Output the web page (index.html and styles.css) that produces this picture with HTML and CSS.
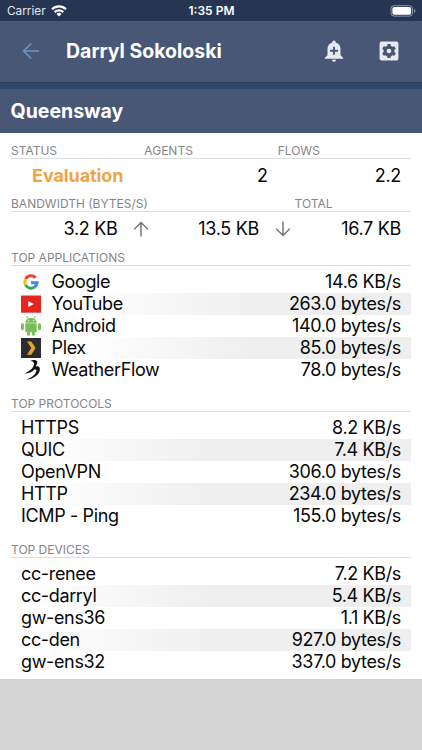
FILE: index.html
```html
<!DOCTYPE html>
<html lang="en">
<head>
<meta charset="utf-8">
<meta name="viewport" content="width=device-width, initial-scale=1">
<title>Darryl Sokoloski</title>
<link rel="stylesheet" href="styles.css">
</head>
<body>
<div class="statusbar">
  <div class="carrier"><span>Carrier</span>
    <svg width="16" height="12" viewBox="0 0 16 12"><g fill="none" stroke="#fff" stroke-width="2.200"><path d="M1 4.300a10 10 0 0 1 14 0"/><path d="M3.700 7.100a6.200 6.200 0 0 1 8.600 0"/></g><path d="M8 11.500L5.500 9a3.600 3.600 0 0 1 5 0z" fill="#fff"/></svg>
  </div>
  <div class="time">1:35 PM</div>
  <svg class="battery" width="26" height="12" viewBox="0 0 26 12"><rect x="1" y=".7" width="21.500" height="10.400" rx="3" fill="none" stroke="#8c98ac"/><rect x="2.400" y="2.100" width="18.700" height="7.600" rx="1.600" fill="#fff"/><path d="M24 4.100q1.400.6 1.400 1.800T24 7.700z" fill="#8c98ac"/></svg>
</div>
<header class="navbar">
  <svg class="back" width="18" height="18" viewBox="0 0 18 18"><path d="M17 9H2M9.200 1.500L1.700 9l7.500 7.500" fill="none" stroke="#7290c7" stroke-width="1.700"/></svg>
  <h1>Darryl Sokoloski</h1>
  <svg class="bell" width="20" height="22" viewBox="0 0 20 22"><path d="M10 .5c1.100 0 1.700.8 1.700 1.900C14.800 3.200 16.500 5.700 16.500 9v6.200l2.700 2.500v1H.8v-1l2.700-2.500V9c0-3.300 1.700-5.800 4.800-6.600C8.300 1.300 8.900.5 10 .5zM7.900 19.700h4.200a2.100 2.100 0 0 1-4.200 0z" fill="#e7eaef"/><path d="M10 6.700v8M6 10.700h8" stroke="#485776" stroke-width="1.900"/></svg>
  <svg class="gear" width="20" height="20" viewBox="0 0 20 20"><rect x=".6" y=".6" width="18.800" height="18.800" rx="2" fill="#e7eaef"/><g fill="#485776"><circle cx="10" cy="10" r="5.500"/><rect x="8.300" y="3" width="3.400" height="14" rx=".6"/><rect x="8.300" y="3" width="3.400" height="14" rx=".6" transform="rotate(60 10 10)"/><rect x="8.300" y="3" width="3.400" height="14" rx=".6" transform="rotate(120 10 10)"/></g><circle cx="10" cy="10" r="2.300" fill="#e7eaef"/></svg>
</header>
<main>
  <h2 class="site">Queensway</h2>
  <section class="panel">
    <div class="labels three"><span>STATUS</span><span>AGENTS</span><span>FLOWS</span></div>
    <div class="values three"><b>Evaluation</b><span>2</span><span>2.2</span></div>
    <div class="labels bandwidth"><span>BANDWIDTH (BYTES/S)</span><span>TOTAL</span></div>
    <div class="values rates">
      <span>3.2 KB</span>
      <svg width="16" height="16" viewBox="0 0 16 16"><path d="M8 15.500V1.500M1.200 8.300L8 1.500l6.800 6.800" fill="none" stroke="#777" stroke-width="1.500"/></svg>
      <span>13.5 KB</span>
      <svg width="16" height="16" viewBox="0 0 16 16"><path d="M8 .5v14M1.200 7.700L8 14.500l6.800-6.800" fill="none" stroke="#777" stroke-width="1.500"/></svg>
      <span>16.7 KB</span>
    </div>
    <div class="labels">TOP APPLICATIONS</div>
    <ul class="list apps">
      <li><svg width="20" height="20" viewBox="0 0 20 20"><g fill="none" stroke-width="2.900"><path d="M4.600 6.900A6.200 6.200 0 0 1 14.600 5.700" stroke="#e94435"/><path d="M4.600 6.900a6.200 6.200 0 0 0 0 6.200" stroke="#f8bc15"/><path d="M4.600 13.100a6.200 6.200 0 0 0 9 1.900" stroke="#34a853"/><path d="M13.600 15a6.200 6.200 0 0 0 2.600-4.300H10" stroke="#4285f4"/></g></svg><span>Google</span><span>14.6 KB/s</span></li>
      <li><svg width="20" height="20" viewBox="0 0 20 20"><path d="M0 1.500h20v17.200H0z" fill="#e52520"/><path d="M7.300 7.200l5.700 2.900-5.700 2.900z" fill="#fff"/></svg><span>YouTube</span><span>263.0 bytes/s</span></li>
      <li><svg width="20" height="20" viewBox="0 0 20 20"><g fill="#78bf59"><path d="M4.300 6.700C4.600 3.900 6.700 2 10 2s5.400 1.900 5.700 4.700z"/><rect x="4.300" y="7.200" width="11.400" height="9" rx=".8"/><rect x="0" y="7.200" width="2.900" height="7" rx="1.400"/><rect x="17.100" y="7.200" width="2.900" height="7" rx="1.400"/><rect x="6.200" y="14" width="2.800" height="5.800" rx="1.300"/><rect x="11" y="14" width="2.800" height="5.800" rx="1.300"/></g><path d="M5.700.2l1.500 2.600M14.300.2l-1.500 2.600" stroke="#78bf59"/><circle cx="7.400" cy="4.700" r=".6" fill="#fff"/><circle cx="12.600" cy="4.700" r=".6" fill="#fff"/></svg><span>Android</span><span>140.0 bytes/s</span></li>
      <li><svg width="20" height="20" viewBox="0 0 20 20"><path d="M0 0h20v20H0z" fill="#2b2c30"/><path d="M6 3.400h4.300l4.300 6.700-4.300 6.700H6l4.300-6.700z" fill="#e5a32a"/></svg><span>Plex</span><span>85.0 bytes/s</span></li>
      <li><svg width="20" height="20" viewBox="0 0 20 20"><path d="M9.300.9C11.500-.2 15-.2 16 1.300c.8 1.300.1 3-1.300 5.200 2.600-.9 4.300.3 4.200 3-.2 4.800-5.500 9.300-13.700 10.300 6.200-2.300 9.900-6 10.200-9 .1-1.300-.6-1.700-2-1.200C11 12.200 8 13.400 3 13.600c3.800-1.400 8.700-4.700 9.900-8.400C13.500 3 12.800 1.200 9.300.9z" fill="#111"/></svg><span>WeatherFlow</span><span>78.0 bytes/s</span></li>
    </ul>
    <div class="labels">TOP PROTOCOLS</div>
    <ul class="list">
      <li><span>HTTPS</span><span>8.2 KB/s</span></li>
      <li><span>QUIC</span><span>7.4 KB/s</span></li>
      <li><span>OpenVPN</span><span>306.0 bytes/s</span></li>
      <li><span>HTTP</span><span>234.0 bytes/s</span></li>
      <li><span>ICMP - Ping</span><span>155.0 bytes/s</span></li>
    </ul>
    <div class="labels">TOP DEVICES</div>
    <ul class="list devices">
      <li><span>cc-renee</span><span>7.2 KB/s</span></li>
      <li><span>cc-darryl</span><span>5.4 KB/s</span></li>
      <li><span>gw-ens36</span><span>1.1 KB/s</span></li>
      <li><span>cc-den</span><span>927.0 bytes/s</span></li>
      <li><span>gw-ens32</span><span>337.0 bytes/s</span></li>
    </ul>
  </section>
</main>
</body>
</html>
```
FILE: styles.css
```css
* { box-sizing: border-box; }
body { margin: 0; height: 750px; overflow: hidden; background: #d4d4d4; color: #080808; font-family: Inter, "Liberation Sans", sans-serif; }
svg { display: block; flex: none; }
h1, h2, ul { margin: 0; padding: 0; }
.statusbar { height: 21px; padding: 0 6px 0 7px; display: grid; grid-template-columns: 1fr auto 1fr; align-items: center; background: #253552; color: #fff; }
.carrier { display: flex; align-items: center; gap: 5px; color: #e3e7ed; font-size: 11.800px; }
.time { font-weight: 600; font-size: 12px; }
.battery { justify-self: end; }
.navbar { height: 62px; padding: 0 23px 2px 22px; display: flex; align-items: center; background: #485776; border-bottom: 1px solid #293c5e; color: #fff; }
.navbar h1 { flex: 1; margin-left: 26px; font-size: 19.500px; font-weight: 700; line-height: 24px; }
.bell { margin-right: 35px; }
main { border-top: 6px solid #2f466d; }
.site { height: 44px; padding: 0 10.500px; background: #485776; color: #fff; font-size: 19.500px; line-height: 45px; font-weight: 700; }
.panel { height: 546px; padding: 9px 11px 0; background: #fff; }
.labels { height: 17px; line-height: 18px; border-bottom: 1px solid #dedede; color: #858585; font-size: 12px; }
.three { display: grid; grid-template-columns: repeat(3, 1fr); }
.bandwidth { display: grid; grid-template-columns: 283.500px 1fr; }
.values { height: 36px; padding-bottom: 3px; align-items: center; font-size: 18px; letter-spacing: -.3px; }
.values.three > * { text-align: right; padding-right: 10px; }
.values.three > b { color: #f1a447; padding-right: 21px; letter-spacing: -.1px; }
.rates { display: grid; height: 37px; padding-bottom: 4px; grid-template-columns: 106.500px 16px 94.500px 16px 1fr; column-gap: 15.500px; padding-right: 10px; }
.rates span { text-align: right; }
.list { height: 129px; padding-top: 5px; list-style: none; }
.list li { height: 22px; padding: 0 10px; display: flex; align-items: center; font-size: 18px; line-height: 22px; letter-spacing: -.36px; white-space: nowrap; }
.list li:nth-child(even) { background: linear-gradient(to right, #fff 5%, #efefef 50%); }
.apps li:nth-child(even) { background: linear-gradient(to right, #fff 16%, #efefef 60%); }
.list svg { margin-right: 10.500px; }
.list span:last-child { margin-left: auto; }
```
